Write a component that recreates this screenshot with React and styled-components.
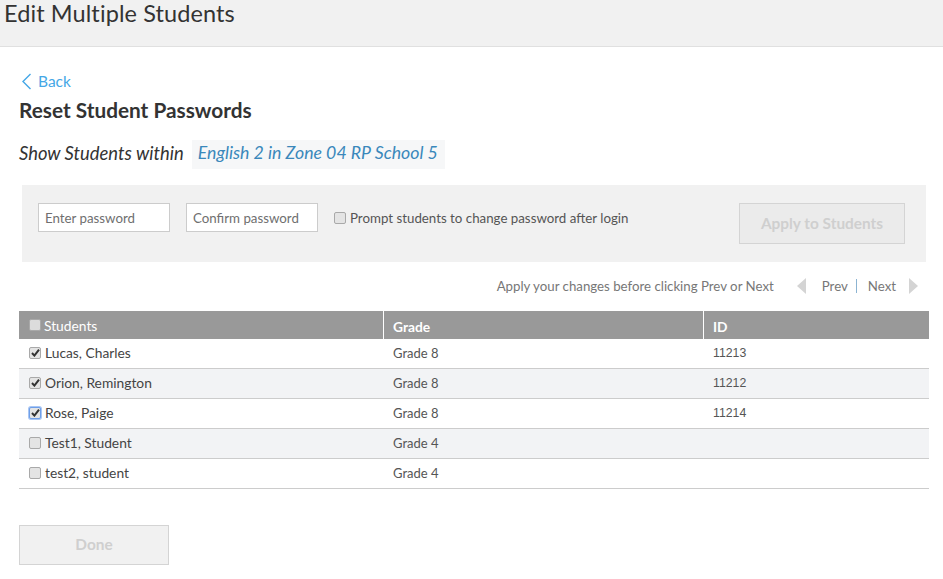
import React from "react";
import styled, { createGlobalStyle } from "styled-components";

const GlobalStyle = createGlobalStyle`
  html, body { margin: 0; padding: 0; background: #fff; }
  body {
    font-family: Lato, "Open Sans", "Liberation Sans", sans-serif;
    color: #333;
    overflow: hidden;
  }
`;

const PageHeader = styled.header`
  height: 46px;
  background: #f1f1f1;
  border-bottom: 1px solid #e0e0e0;
  padding-left: 4px;
`;

const PageTitle = styled.h1`
  margin: 0;
  font-size: 23.5px;
  line-height: 27px;
  font-weight: 400;
  color: #333;
  letter-spacing: 0.1px;
`;

const Main = styled.main`
  padding: 24px 14px 0 19px;
`;

const BackLink = styled.a`
  display: flex;
  align-items: center;
  gap: 6px;
  height: 20px;
  margin-left: 2px;
  font-size: 15.5px;
  color: #45a7e6;
`;

const Heading = styled.h2`
  margin: 6px 0 0;
  font-size: 20.8px;
  line-height: 26px;
  font-weight: 700;
  color: #333;
`;

const ScopeRow = styled.div`
  display: flex;
  align-items: flex-start;
  gap: 8px;
  margin-top: 17px;
  font-size: 18.4px;
  line-height: 26px;
  font-style: italic;
`;

const ScopeLink = styled.span`
  background: #f6f7f8;
  color: #3a88bb;
  font-size: 17.7px;
  padding: 0 7px 3px 6px;
`;

const Panel = styled.section`
  display: flex;
  align-items: flex-start;
  height: 77px;
  box-sizing: border-box;
  margin: 16px 3px 0;
  padding: 18px 21px 0 16px;
  background: #f1f1f1;
`;

const TextBox = styled.input`
  width: 132px;
  height: 29px;
  box-sizing: border-box;
  margin-right: 16px;
  padding: 0 6px;
  border: 1px solid #ccc;
  background: #fff;
  font: inherit;
  font-size: 13.3px;
  &::placeholder { color: #6f6f6f; opacity: 1; }
`;

const PromptLabel = styled.label`
  display: flex;
  align-items: center;
  gap: 4px;
  height: 29px;
  font-size: 13.3px;
  color: #555;
`;

const Box = styled.span`
  flex: none;
  display: inline-flex;
  align-items: center;
  justify-content: center;
  width: 10px;
  height: 10px;
  border: 1px solid ${(p) => (p.$focus ? "#6f9fe8" : "#a9a9a9")};
  border-radius: 2px;
  background: ${(p) => (p.$solid ? "#dcdcdc" : "#e4e4e4")};
  box-shadow: ${(p) => (p.$focus ? "0 0 0 1px #a8c6f5" : "none")};
`;

const ActionButton = styled.button`
  width: ${(p) => p.$width}px;
  height: ${(p) => p.$height}px;
  box-sizing: border-box;
  border: 1px solid #d4d4d4;
  background: ${(p) => p.$bg};
  color: #cfcfcf;
  font: inherit;
  font-size: 15.4px;
  font-weight: 700;
  padding: 0 0 2px;
`;

const PanelAction = styled.div`
  margin-left: auto;
`;

const PagerRow = styled.div`
  display: flex;
  align-items: center;
  justify-content: flex-end;
  height: 49px;
  box-sizing: border-box;
  padding: 0 11px 2px 0;
  font-size: 13.25px;
  color: #777;
`;

const PagerHint = styled.span`
  margin-right: 23px;
`;

const PagerPrev = styled.span`
  margin-left: 16px;
`;

const PagerDivider = styled.span`
  width: 1px;
  height: 14px;
  margin-left: 8px;
  background: #8cb4d2;
`;

const PagerNext = styled.span`
  margin: 0 13px 0 11px;
`;

const Table = styled.table`
  width: 910px;
  table-layout: fixed;
  border-collapse: separate;
  border-spacing: 0;
  font-size: 13.8px;
`;

const HeadCell = styled.th`
  width: ${(p) => p.$width}px;
  height: 28px;
  box-sizing: border-box;
  padding: ${(p) => p.$top}px 0 0 ${(p) => p.$pad}px;
  background: #999;
  color: #fff;
  text-align: left;
  font-weight: ${(p) => p.$weight};
  border-left: ${(p) => (p.$divider ? "1px solid #fff" : "none")};
`;

const HeadInner = styled.span`
  display: flex;
  align-items: center;
  gap: 3px;
`;

const Row = styled.tr`
  background: ${(p) => (p.$alt ? "#f2f3f5" : "#fff")};
`;

const Cell = styled.td`
  height: 30px;
  box-sizing: border-box;
  padding: 0 0 2px ${(p) => p.$pad}px;
  border-bottom: 1px solid #ccc;
  font-size: 13px;
  color: #555;
`;

const IdCell = styled(Cell)`
  font-family: "Liberation Sans", Arial, sans-serif;
  font-size: 12.3px;
`;

const NameCell = styled.span`
  display: flex;
  align-items: center;
  gap: 4px;
  font-size: 13.8px;
  color: #444;
`;

const DoneWrap = styled.div`
  margin-top: 36px;
`;

const CheckMark = () => (
  <svg width="9" height="9" viewBox="0 0 9 9">
    <path d="M1 5l2.4 2.6L8 1.6" fill="none" stroke="#333" strokeWidth="2" />
  </svg>
);

const Check = ({ checked, focus, solid }) => (
  <Box $focus={focus} $solid={solid}>{checked && <CheckMark />}</Box>
);

const Arrow = ({ flip }) => (
  <svg width="9" height="16" viewBox="0 0 9 16">
    <path d={flip ? "M0 0l9 8-9 8z" : "M9 0L0 8l9 8z"} fill="#d4d4d4" />
  </svg>
);

const students = [
  { name: "Lucas, Charles", grade: "Grade 8", id: "11213", checked: true },
  { name: "Orion, Remington", grade: "Grade 8", id: "11212", checked: true },
  { name: "Rose, Paige", grade: "Grade 8", id: "11214", checked: true, focus: true },
  { name: "Test1, Student", grade: "Grade 4", id: "" },
  { name: "test2, student", grade: "Grade 4", id: "" },
];

export default function App() {
  return (
    <>
      <GlobalStyle />
      <PageHeader>
        <PageTitle>Edit Multiple Students</PageTitle>
      </PageHeader>
      <Main>
        <BackLink>
          <svg width="11" height="17" viewBox="0 0 11 17">
            <path d="M9.5 1L2 8.5 9.5 16" fill="none" stroke="#45a7e6" strokeWidth="1.4" />
          </svg>
          Back
        </BackLink>
        <Heading>Reset Student Passwords</Heading>
        <ScopeRow>
          Show Students within
          <ScopeLink>English 2 in Zone 04 RP School 5</ScopeLink>
        </ScopeRow>
        <Panel>
          <TextBox placeholder="Enter password" />
          <TextBox placeholder="Confirm password" />
          <PromptLabel>
            <Check />
            Prompt students to change password after login
          </PromptLabel>
          <PanelAction>
            <ActionButton $width={166} $height={41} $bg="#ebebeb">Apply to Students</ActionButton>
          </PanelAction>
        </Panel>
        <PagerRow>
          <PagerHint>Apply your changes before clicking Prev or Next</PagerHint>
          <Arrow />
          <PagerPrev>Prev</PagerPrev>
          <PagerDivider />
          <PagerNext>Next</PagerNext>
          <Arrow flip />
        </PagerRow>
        <Table>
          <thead>
            <tr>
              <HeadCell $width={364} $pad={10} $top={0} $weight={400}>
                <HeadInner><Check solid />Students</HeadInner>
              </HeadCell>
              <HeadCell $width={320} $pad={9} $top={2} $weight={700} $divider>Grade</HeadCell>
              <HeadCell $width={226} $pad={9} $top={2} $weight={700} $divider>ID</HeadCell>
            </tr>
          </thead>
          <tbody>
            {students.map((s, i) => (
              <Row key={s.name} $alt={i % 2 === 1}>
                <Cell $pad={10}>
                  <NameCell><Check checked={s.checked} focus={s.focus} />{s.name}</NameCell>
                </Cell>
                <Cell $pad={10}>{s.grade}</Cell>
                <IdCell $pad={10}>{s.id}</IdCell>
              </Row>
            ))}
          </tbody>
        </Table>
        <DoneWrap>
          <ActionButton $width={150} $height={40} $bg="#f1f1f1">Done</ActionButton>
        </DoneWrap>
      </Main>
    </>
  );
}
